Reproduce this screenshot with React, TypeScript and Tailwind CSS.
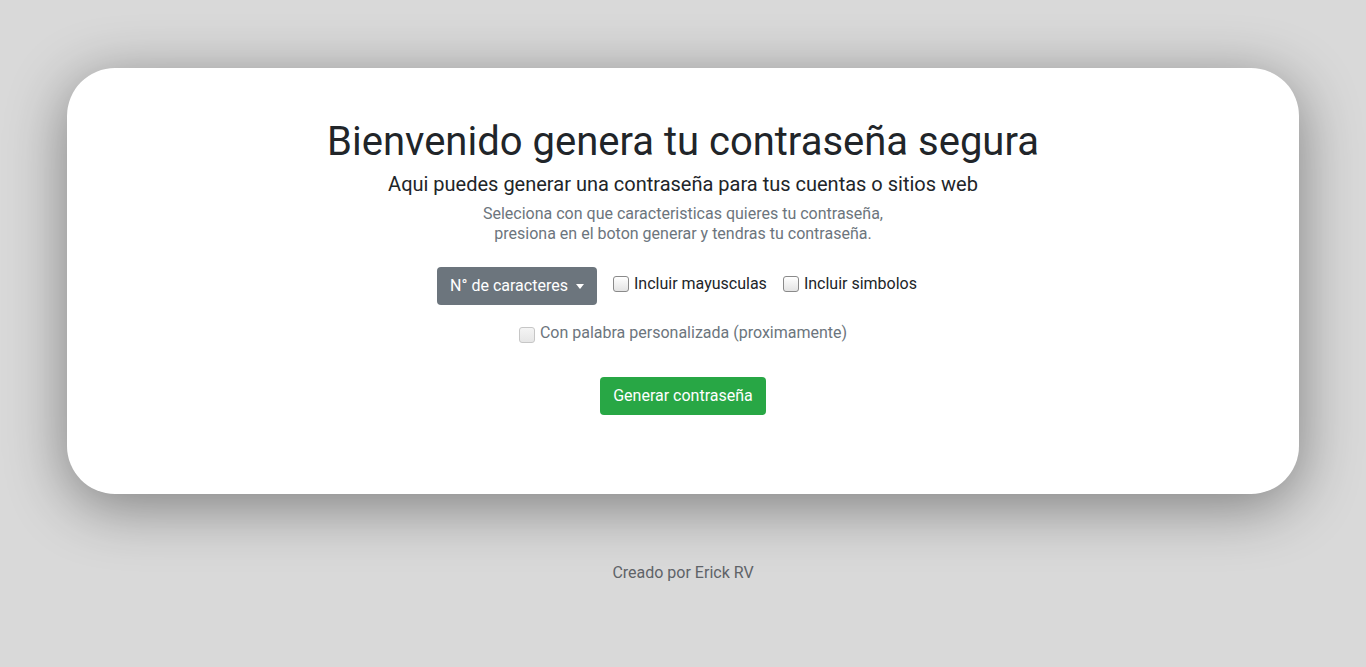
import React from "react";

function Box({ disabled }: { disabled?: boolean }) {
  return (
    <span
      className={
        disabled
          ? "inline-block w-[16px] h-[16px] rounded-[3px] border border-[#c6c6c6] bg-gradient-to-b from-[#f4f4f4] to-[#e6e6e6] mr-[5px] shrink-0"
          : "inline-block w-[16px] h-[16px] rounded-[3px] border border-[#8a8a8a] bg-gradient-to-b from-white to-[#e4e4e4] mr-[5px] shrink-0"
      }
    />
  );
}

export default function App() {
  return (
    <div
      className="min-h-[667px] w-full bg-[#d9d9d9] text-[#212529]"
      style={{ fontFamily: "Roboto, 'Liberation Sans', sans-serif" }}
    >
      <div className="pt-[68px]">
        <div className="mx-auto w-[1232px] h-[426px] bg-white rounded-[48px] shadow-[0_12px_60px_rgba(0,0,0,0.42)] flex flex-col items-center pt-[50px] box-border">
          <h1 className="text-[40px] leading-[48px] font-normal">Bienvenido genera tu contraseña segura</h1>
          <h5 className="mt-[6px] text-[20px] leading-[24px] font-normal">Aqui puedes generar una contraseña para tus cuentas o sitios web</h5>
          <p className="mt-[8px] text-[16px] leading-[20px] text-[#6c757d] text-center">
            Seleciona con que caracteristicas quieres tu contraseña,
            <br />
            presiona en el boton generar y tendras tu contraseña.
          </p>
          <div className="mt-[23px] flex items-center">
            <button className="h-[38px] w-[160px] rounded-[4px] bg-[#6c757d] text-white text-[16px] flex items-center justify-center gap-[8px]">
              <span>N° de caracteres</span>
              <span className="inline-block w-0 h-0 border-l-[4px] border-r-[4px] border-t-[5px] border-l-transparent border-r-transparent border-t-white"></span>
            </button>
            <label className="ml-[16px] flex items-center text-[16px] leading-[24px] -mt-[5px]">
              <Box />
              Incluir mayusculas
            </label>
            <label className="ml-[16px] mr-[12px] flex items-center text-[16px] leading-[24px] -mt-[5px]">
              <Box />
              Incluir simbolos
            </label>
          </div>
          <label className="mt-[16px] flex items-center text-[16px] leading-[24px] text-[#6c757d]">
            <span className="mt-[3px] flex"><Box disabled /></span>
            Con palabra personalizada (proximamente)
          </label>
          <button className="mt-[32px] h-[38px] px-[13px] rounded-[4px] bg-[#28a745] text-white text-[16px]">
            Generar contraseña
          </button>
        </div>
      </div>
      <p className="mt-[67px] text-center text-[16px] leading-[24px] text-[#5f6368]">Creado por Erick RV</p>
    </div>
  );
}
